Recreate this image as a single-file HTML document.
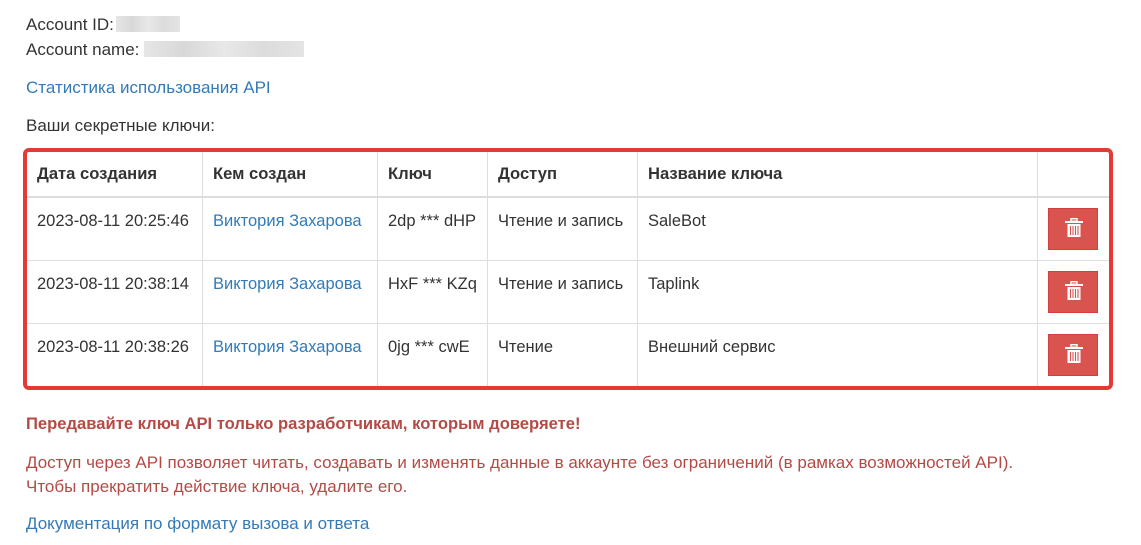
<!DOCTYPE html>
<html><head><meta charset="utf-8"><style>
body{margin:0;background:#fff;font-family:"Liberation Sans",sans-serif;font-size:17px;color:#333;width:1141px;height:545px;position:relative;overflow:hidden}
.t{position:absolute;white-space:nowrap;line-height:20px}
.c{font-size:16.5px}
a,.l{color:#337ab7;text-decoration:none}
.blur{display:inline-block;background:linear-gradient(90deg,#e6e6e6,#d8d8d8,#e8e8e8,#dcdcdc,#e4e4e4);height:16px;vertical-align:-2px}
.frame{position:absolute;left:23px;top:148px;width:1082px;height:234px;border:4px solid #e53a32;border-radius:6px}
.vl{position:absolute;top:152px;height:234px;width:1px;background:#ddd}
.hl{position:absolute;left:27px;width:1082px;height:1px;background:#ddd}
.btn{position:absolute;left:1048px;width:48px;height:40px;background:#d9534f;border:1px solid #d43f3a}
.btn svg{position:absolute;left:16px;top:9px}
.h{font-weight:bold;font-size:16.6px}
.r{color:#b44a46}
</style></head><body>
<div class="t" style="left:26px;top:15px">Account ID:<span class="blur" style="width:64px;margin-left:2px"></span></div>
<div class="t" style="left:26px;top:40px">Account name: <span class="blur" style="width:160px"></span></div>
<div class="t l" style="left:26px;top:78px">Статистика использования API</div>
<div class="t" style="left:26px;top:116px">Ваши секретные ключи:</div>
<div class="frame"></div>
<div class="hl" style="top:196px;height:2px"></div>
<div class="hl" style="top:260px"></div>
<div class="hl" style="top:323px"></div>
<div class="vl" style="left:202px"></div>
<div class="vl" style="left:377px"></div>
<div class="vl" style="left:487px"></div>
<div class="vl" style="left:637px"></div>
<div class="vl" style="left:1037px"></div>
<div class="t h" style="left:37px;top:164px">Дата создания</div>
<div class="t h" style="left:213px;top:164px">Кем создан</div>
<div class="t h" style="left:388px;top:164px">Ключ</div>
<div class="t h" style="left:498px;top:164px">Доступ</div>
<div class="t h" style="left:648px;top:164px">Название ключа</div>

<div class="t c" style="left:37px;top:211px">2023-08-11 20:25:46</div>
<div class="t c l" style="left:213px;top:211px">Виктория Захарова</div>
<div class="t c" style="left:388px;top:211px">2dp *** dHP</div>
<div class="t c" style="left:498px;top:211px">Чтение и запись</div>
<div class="t c" style="left:648px;top:211px">SaleBot</div>

<div class="t c" style="left:37px;top:274px">2023-08-11 20:38:14</div>
<div class="t c l" style="left:213px;top:274px">Виктория Захарова</div>
<div class="t c" style="left:388px;top:274px">HxF *** KZq</div>
<div class="t c" style="left:498px;top:274px">Чтение и запись</div>
<div class="t c" style="left:648px;top:274px">Taplink</div>

<div class="t c" style="left:37px;top:337px">2023-08-11 20:38:26</div>
<div class="t c l" style="left:213px;top:337px">Виктория Захарова</div>
<div class="t c" style="left:388px;top:337px">0jg *** cwE</div>
<div class="t c" style="left:498px;top:337px">Чтение</div>
<div class="t c" style="left:648px;top:337px">Внешний сервис</div>

<div class="btn" style="top:208px"><svg width="18" height="20" viewBox="0 0 18 20"><rect x="6" y="0.7" width="6" height="2.5" fill="none" stroke="#fff" stroke-width="1.4"/><rect x="0" y="3" width="18" height="2" fill="#fff"/><rect x="2.5" y="6" width="13" height="13" fill="#fff"/><g stroke="#d9534f" stroke-width="1.1"><line x1="5.5" y1="8" x2="5.5" y2="17"/><line x1="8" y1="8" x2="8" y2="17"/><line x1="10.5" y1="8" x2="10.5" y2="17"/><line x1="13" y1="8" x2="13" y2="17"/></g></svg></div>
<div class="btn" style="top:271px"><svg width="18" height="20" viewBox="0 0 18 20"><rect x="6" y="0.7" width="6" height="2.5" fill="none" stroke="#fff" stroke-width="1.4"/><rect x="0" y="3" width="18" height="2" fill="#fff"/><rect x="2.5" y="6" width="13" height="13" fill="#fff"/><g stroke="#d9534f" stroke-width="1.1"><line x1="5.5" y1="8" x2="5.5" y2="17"/><line x1="8" y1="8" x2="8" y2="17"/><line x1="10.5" y1="8" x2="10.5" y2="17"/><line x1="13" y1="8" x2="13" y2="17"/></g></svg></div>
<div class="btn" style="top:334px"><svg width="18" height="20" viewBox="0 0 18 20"><rect x="6" y="0.7" width="6" height="2.5" fill="none" stroke="#fff" stroke-width="1.4"/><rect x="0" y="3" width="18" height="2" fill="#fff"/><rect x="2.5" y="6" width="13" height="13" fill="#fff"/><g stroke="#d9534f" stroke-width="1.1"><line x1="5.5" y1="8" x2="5.5" y2="17"/><line x1="8" y1="8" x2="8" y2="17"/><line x1="10.5" y1="8" x2="10.5" y2="17"/><line x1="13" y1="8" x2="13" y2="17"/></g></svg></div>

<div class="t h r" style="left:26px;top:414px">Передавайте ключ API только разработчикам, которым доверяете!</div>
<div class="t r" style="left:26px;top:453px">Доступ через API позволяет читать, создавать и изменять данные в аккаунте без ограничений (в рамках возможностей API).</div>
<div class="t r" style="left:26px;top:477px">Чтобы прекратить действие ключа, удалите его.</div>
<div class="t l" style="left:26px;top:514px">Документация по формату вызова и ответа</div>
</body></html>
